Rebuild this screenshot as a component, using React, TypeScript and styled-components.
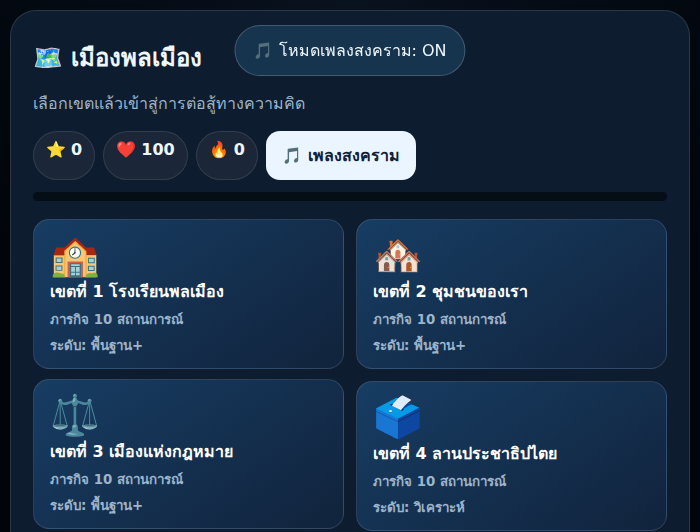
import React from "react";
import styled, { createGlobalStyle } from "styled-components";

const GlobalStyle = createGlobalStyle`
  * { box-sizing: border-box; }
  html, body { height: 100%; }
  body {
    margin: 0;
    overflow: hidden;
    background: radial-gradient(circle at top, #0a1422, #02060d 70%);
    color: #eef7ff;
    font-family: "DejaVu Sans", sans-serif;
    font-size: 16px;
  }
`;

const Page = styled.main`
  height: 532px;
  padding: 10px;
  overflow: hidden;
`;

const Panel = styled.section`
  height: 720px;
  padding: 22px;
  border: 1px solid rgba(255, 255, 255, 0.12);
  border-radius: 26px;
  background: #0d1c2e;
  box-shadow: 0 20px 60px rgba(0, 0, 0, 0.45);
`;

const Title = styled.h1`
  margin: 0;
  height: 50px;
  font-size: 24px;
  line-height: 50px;
  font-weight: 700;
`;

const Subtitle = styled.p`
  margin: 8px 0 15px;
  height: 25px;
  line-height: 25px;
  color: #9db4ca;
`;

const Stats = styled.div`
  display: flex;
  gap: 8px;
  height: 49px;
`;

const Stat = styled.span`
  padding: 8px 12px;
  border: 1px solid rgba(255, 255, 255, 0.1);
  border-radius: 999px;
  background: #1b2738;
  line-height: 19px;
  white-space: pre;
`;

const MusicButton = styled.button`
  padding: 0 16px;
  border: 0;
  border-radius: 14px;
  background: #eaf5ff;
  color: #10203a;
  font: inherit;
  font-weight: 700;
  white-space: pre;
`;

const Progress = styled.div`
  height: 9px;
  margin: 12px 0 18px;
  border-radius: 9px;
  background: #050e17;
`;

const Districts = styled.div`
  display: grid;
  grid-template-columns: 1fr 1fr;
  gap: 12px;
`;

const District = styled.button<{ $raised?: boolean }>`
  display: flex;
  flex-direction: column;
  height: 150px;
  padding: 11px 16px 16px;
  border: 1px solid rgba(255, 255, 255, 0.12);
  border-radius: 16px;
  background: linear-gradient(145deg, #173d63, #11233c);
  color: #fff;
  font: inherit;
  text-align: left;
  font-weight: 700;
  transform: ${(p) => (p.$raised ? "translateY(-2px)" : "none")};
`;

const DistrictIcon = styled.span`
  height: 48px;
  font-size: 40px;
  line-height: 48px;
`;

const DistrictName = styled.span`
  height: 25px;
  line-height: 25px;
`;

const DistrictInfo = styled.span`
  height: 26px;
  margin-top: 3px;
  font-size: 13.333px;
  line-height: 26px;
  color: #9db4ca;

  & + & { margin-top: 0; }
`;

const Toast = styled.div`
  position: fixed;
  top: 25px;
  left: 50%;
  transform: translateX(-50%);
  height: 51px;
  padding: 0 18px;
  border: 1px solid rgba(255, 255, 255, 0.2);
  border-radius: 999px;
  background: #16344d;
  line-height: 49px;
  white-space: pre;
`;

const stats = [
  { icon: "⭐", value: 0 },
  { icon: "❤️", value: 100 },
  { icon: "🔥", value: 0 },
];

const districts = [
  { icon: "🏫", name: "เขตที่ 1 โรงเรียนพลเมือง", level: "พื้นฐาน+" },
  { icon: "🏘️", name: "เขตที่ 2 ชุมชนของเรา", level: "พื้นฐาน+" },
  { icon: "⚖️", name: "เขตที่ 3 เมืองแห่งกฎหมาย", level: "พื้นฐาน+", raised: true },
  { icon: "🗳️", name: "เขตที่ 4 ลานประชาธิปไตย", level: "วิเคราะห์" },
];

export default function App() {
  return (
    <>
      <GlobalStyle />
      <Page>
        <Panel>
          <Title>🗺️ เมืองพลเมือง</Title>
          <Subtitle>เลือกเขตแล้วเข้าสู่การต่อสู้ทางความคิด</Subtitle>
          <Stats>
            {stats.map((s) => (
              <Stat key={s.icon}>
                {s.icon} <b>{s.value}</b>
              </Stat>
            ))}
            <MusicButton>🎵 เพลงสงคราม</MusicButton>
          </Stats>
          <Progress />
          <Districts>
            {districts.map((d) => (
              <District key={d.name} $raised={d.raised}>
                <DistrictIcon>{d.icon}</DistrictIcon>
                <DistrictName>{d.name}</DistrictName>
                <DistrictInfo>ภารกิจ 10 สถานการณ์</DistrictInfo>
                <DistrictInfo>ระดับ: {d.level}</DistrictInfo>
              </District>
            ))}
          </Districts>
        </Panel>
      </Page>
      <Toast>🎵 โหมดเพลงสงคราม: ON</Toast>
    </>
  );
}
